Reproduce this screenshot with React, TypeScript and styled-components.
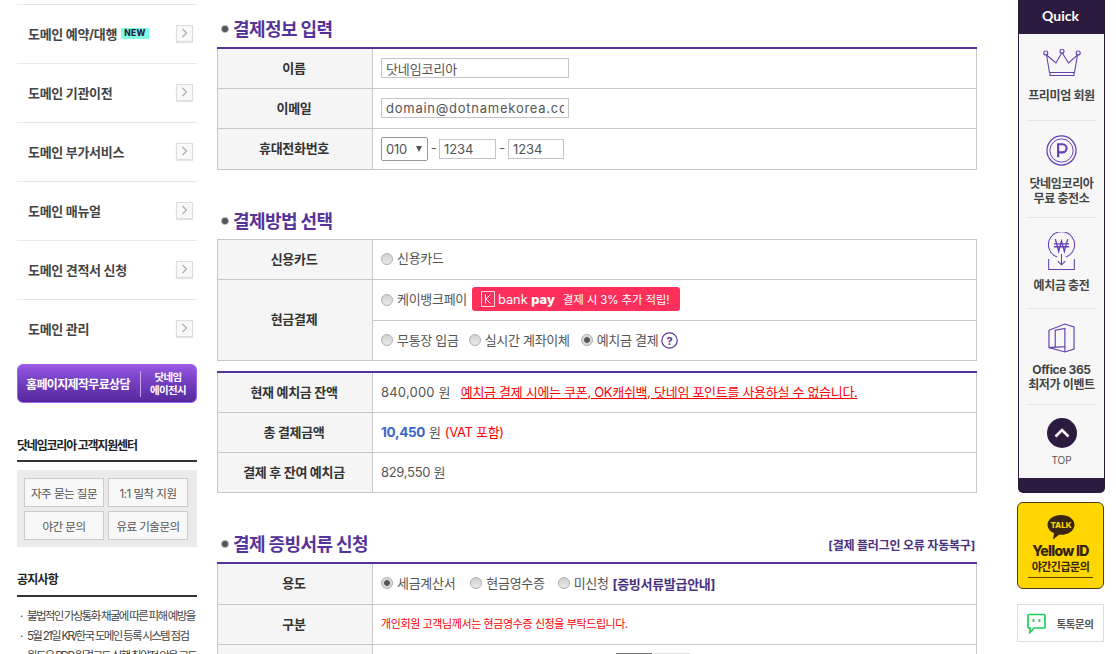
import React from "react";
import styled, { createGlobalStyle } from "styled-components";

const Global = createGlobalStyle`
  html, body { margin: 0; padding: 0; background: #fff; }
  body { font-family: Inter, "Noto Sans CJK KR", "Noto Sans", sans-serif; font-size: 13px; color: #555; }
  * { box-sizing: border-box; }
`;

const Page = styled.div`
  width: 1116px; height: 654px; overflow: hidden; display: flex; align-items: flex-start; padding-left: 17px;
`;

const Sidebar = styled.aside`width: 180px; flex: none; padding-top: 4px; margin-right: 20px;`;
const NavRow = styled.div`
  height: 59px; border-top: 1px solid #e8e8e8; display: flex; align-items: center; padding: 0 4px 2px 11px;
  font-size: 13px; font-weight: 700; color: #444; letter-spacing: -0.3px;
`;
const NavLabel = styled.span`flex: 1; display: flex; align-items: center; gap: 4px; white-space: nowrap;`;
const NewBadge = styled.span`
  background: #7fffe0; color: #2d1a3f; font: 800 8.5px Inter, sans-serif; letter-spacing: 0.3px;
  padding: 0 3px; height: 11px; line-height: 11px; display: inline-block; margin-top: 1px;
`;
const ChevronBox = styled.span`
  width: 17px; height: 17px; border: 1px solid #ddd; background: #f8f8f8; display: flex; align-items: center;
  justify-content: center; box-shadow: 0 1px 1px #e5e5e5;
`;
const Banner = styled.div`
  height: 39px; margin-top: 6px; border-radius: 6px; border: 1px solid #9a62ea;
  background: linear-gradient(#9a58e6, #7a44c8 35%, #56289c); color: #fff; display: flex; align-items: center;
  font-weight: 700; white-space: nowrap; padding-left: 8px;
`;
const BannerMain = styled.span`font-size: 12px; letter-spacing: -0.65px; width: 114px; text-align: left;`;
const BannerSide = styled.span`
  font-size: 10.5px; line-height: 13px; text-align: center; border-left: 1px solid #c9a8f0;
  width: 50px; padding-left: 5px; letter-spacing: -0.6px;
`;
const SideHeading = styled.h3<{ $ls: number }>`
  margin: 0; font-size: 12px; font-weight: 700; color: #222; letter-spacing: ${p => p.$ls}px; border-bottom: 2px solid #333;
  display: flex; align-items: center;
`;
const HelpHeading = styled(SideHeading)`height: 33px; margin-top: 26px;`;
const NoticeHeading = styled(SideHeading)`height: 32px; margin-top: 18px; padding-bottom: 3px;`;
const HelpGrid = styled.div`
  margin-top: 8px; background: #ebebeb; padding: 8px 9px 7px 7px; display: grid; grid-template-columns: 80px 80px;
  grid-auto-rows: 29px; gap: 4px;
`;
const HelpButton = styled.div`
  background: #f8f8f8; border: 1px solid #ccc; display: flex; align-items: center; justify-content: center;
  font-size: 11.5px; color: #555; letter-spacing: -0.5px;
`;
const NoticeList = styled.ul`margin: 9px 0 0; padding: 0; list-style: none;`;
const NoticeItem = styled.li`
  height: 20px; line-height: 20px; font-size: 11.5px; color: #444; letter-spacing: -1.7px; white-space: nowrap;
  padding-left: 3px; overflow: hidden; display: flex;
  &::before { content: "·"; width: 7px; flex: none; }
`;

const Main = styled.main`width: 760px; flex: none; margin-right: 41px;`;
const HeadRow = styled.div`height: 36px; display: flex; align-items: center; justify-content: space-between; padding-bottom: 2px;`;
const Title = styled.h2`
  margin: 0; display: flex; align-items: center; gap: 5px; font-size: 18px; font-weight: 700; color: #56339a; letter-spacing: -0.6px;
  padding-left: 5px;
`;
const Dot = styled.i`
  width: 6px; height: 6px; border-radius: 50%; background: #555; box-shadow: 0 0 0 1px #bbb; display: inline-block; margin-top: 2px;
`;
const HeadLink = styled.span`font-size: 12px; font-weight: 700; color: #48327e; letter-spacing: -0.2px; padding-right: 2px; margin-top: 2px;`;
const Section = styled.section<{ $gap: number }>`margin-top: ${p => p.$gap}px;`;
const Table = styled.table<{ $purple?: boolean }>`
  width: 760px; table-layout: fixed; border-collapse: collapse; border-top: ${p => (p.$purple ? "2px solid #56339a" : "1px solid #c8c8c8")};
  border-left: 1px solid #c8c8c8; border-right: 1px solid #c8c8c8;
`;
const Th = styled.th`
  width: 155px; background: #f5f5f5; font-size: 13px; font-weight: 700; color: #333; text-align: center; padding: 0 2px 2px 0;
  border-right: 1px solid #c8c8c8; border-bottom: 1px solid #c8c8c8; letter-spacing: -0.3px;
`;
const Tr = styled.tr<{ $h?: number }>`height: ${p => p.$h ?? 40}px;`;
const Td = styled.td`
  padding: 0 8px 2px; border-bottom: 1px solid #c8c8c8; font-size: 13px; color: #555; white-space: nowrap; letter-spacing: -0.3px;
`;
const FieldTd = styled(Td)`padding-bottom: 0;`;
const TabTd = styled(Td)`vertical-align: top; padding-top: 8px;`;
const Flex = styled.div`display: flex; align-items: center;`;
const Field = styled.input<{ $w: number; $ls?: number }>`
  width: ${p => p.$w}px; height: 20px; border: 1px solid #c4c4c4; padding: 0 4px; font: 13px Inter, "Noto Sans CJK KR", sans-serif;
  color: #555; outline: none; display: block; background: #fff; letter-spacing: ${p => p.$ls ?? -0.1}px;
`;
const SelectBox = styled.div`
  width: 47px; height: 24px; border: 1px solid #999; border-radius: 2px; display: flex; align-items: center; justify-content: space-between;
  padding: 0 5px 0 4px; font-size: 13px; color: #555;
`;
const Caret = styled.i`
  width: 0; height: 0; border-left: 3.5px solid transparent; border-right: 3.5px solid transparent; border-top: 6px solid #555;
`;
const Dash = styled.span<{ $w: number }>`width: ${p => p.$w}px; text-align: center; margin-top: -2px;`;
const RadioMark = styled.i<{ $on?: boolean }>`
  width: 12px; height: 12px; border-radius: 50%; border: 1px solid #b0b0b0; flex: none; display: inline-block; margin: 2px 4px 0 0;
  background: ${p => p.$on
    ? "radial-gradient(circle, #555 0 2.5px, #d8d8d8 3.2px)"
    : "linear-gradient(#cfcfcf, #ebebeb)"};
`;
const Option = styled.label<{ $mr?: number }>`
  display: inline-flex; align-items: center; margin-right: ${p => p.$mr ?? 0}px;
`;
const KPay = styled.span`
  margin-left: 5px; width: 208px; height: 24px; border-radius: 3px; background: #ff2f5b; color: #fff; display: inline-flex; align-items: center;
  padding-left: 9px; font-size: 11.5px; letter-spacing: -0.15px; margin-top: 1px;
`;
const KPayBrand = styled.span`font: 400 12.8px Inter, sans-serif; margin: 0 8px 0 3px; letter-spacing: 0;`;
const KPayStrong = styled.b`font-weight: 800;`;
const Money = styled.span<{ $ls?: number }>`letter-spacing: ${p => p.$ls ?? -0.3}px;`;
const Underlined = styled.span`color: #f00; text-decoration: underline; margin-left: 10px; font-size: 13px; letter-spacing: -0.3px;`;
const Amount = styled.b`color: #3b66c4; font-size: 13.5px; font-weight: 700; margin-right: 4px;`;
const Red = styled.span`color: #f00;`;
const VatNote = styled(Red)`margin-left: 4px;`;
const SmallRed = styled(Red)`font-size: 11px; letter-spacing: -0.4px;`;
const GuideLink = styled.b`color: #48327e; margin-left: 4px; font-size: 13px; letter-spacing: -0.3px;`;
const Tabs = styled.div`display: flex; gap: 2px; margin-left: 235px; height: 20px;`;
const TabBox = styled.span<{ $dark?: boolean }>`
  width: 36px; height: 20px; background: ${p => (p.$dark ? "#777" : "#ddd")};
`;

const Rail = styled.div`width: 88px; flex: none;`;
const Quick = styled.nav`width: 87px; display: flex; flex-direction: column;`;
const QuickHead = styled.div`
  height: 34px; background: #2d1a3f; color: #fff; font-size: 14px; font-weight: 700; display: flex; align-items: center; justify-content: center;
  font-family: Lato, Inter, sans-serif; padding: 0 2px 4px 0;
`;
const QuickBody = styled.div`background: #f7f7f7; border-left: 1px solid #2d1a3f; border-right: 1px solid #2d1a3f;`;
const QuickItem = styled.div<{ $h: number; $top?: number }>`
  height: ${p => p.$h}px; display: flex; flex-direction: column; align-items: center; padding-top: ${p => p.$top ?? 14}px;
  font-size: 12px; font-weight: 700; line-height: 15px; color: #444; text-align: center; letter-spacing: -0.35px;
  &::after { content: ""; width: 70px; height: 1px; background: #e5e5e5; margin-top: auto; }
`;
const QuickLabel = styled.span<{ $gap: number }>`margin-top: ${p => p.$gap}px; white-space: nowrap;`;
const TopItem = styled.div`
  height: 73px; display: flex; flex-direction: column; align-items: center; padding-top: 13px; font-size: 10px; color: #555;
`;
const TopCircle = styled.span`
  width: 30px; height: 30px; border-radius: 50%; background: #2d1a3f; display: flex; align-items: center; justify-content: center; margin-bottom: 6px;
`;
const QuickFoot = styled.div`height: 15px; background: #2d1a3f; border-radius: 0 0 5px 5px;`;
const YellowCard = styled.div`
  width: 87px; height: 87px; margin: 9px 0 0 -1px; background: #ffd600; border: 1px solid #4a3b1c; border-radius: 6px; display: flex; flex-direction: column;
  align-items: center; padding-top: 11px; color: #33240c;
`;
const YellowTitle = styled.b`font: 800 14px Inter, sans-serif; letter-spacing: -0.7px; margin-top: 1px; line-height: 18px;`;
const YellowSub = styled.span`
  font-size: 11px; font-weight: 700; letter-spacing: -0.5px; line-height: 14px; border-bottom: 1px solid #5a4510; padding: 0 4px 3px; margin-top: 0;
`;
const TalkCard = styled.div`
  width: 87px; height: 38px; margin: 15px 0 0 -1px; border: 1px solid #ddd; background: #fff; display: flex; align-items: center; justify-content: center; gap: 10px;
  font-size: 10.5px; font-weight: 700; color: #555; letter-spacing: -0.4px;
`;

const Chevron = () => (
  <svg width="7" height="10" viewBox="0 0 7 10" fill="none"><path d="M1.500 1l4 4-4 4" stroke="#aaa" strokeWidth="1.100" /></svg>
);
const KLogo = () => (
  <svg width="14" height="16" viewBox="0 0 14 16" fill="none" stroke="#fff">
    <path d="M.5.500h13v15H.5z" strokeWidth=".8" />
    <path d="M4.500 3.500v9M9.500 3.500L5 8l4.500 4.500" strokeWidth="1" />
  </svg>
);
const HelpIcon = () => (
  <svg width="17" height="17" viewBox="0 0 17 17" style={{ marginLeft: 3, marginTop: 2 }}>
    <circle cx="8.500" cy="8.500" r="7.700" fill="#fff" stroke="#56339a" strokeWidth="1.200" />
    <text x="8.500" y="12.500" fontSize="11" fontWeight="700" textAnchor="middle" fill="#56339a" fontFamily="Inter, sans-serif">?</text>
  </svg>
);
const Crown = () => (
  <svg width="38" height="29" viewBox="0 0 38 29" fill="none" stroke="#6440b4" strokeWidth="1.100">
    <circle cx="2.800" cy="4" r="2" /><circle cx="19" cy="2.300" r="2" /><circle cx="35.200" cy="4" r="2" />
    <path d="M3.500 6l3 17.500h25l3-17.500-9 8L19.500 4.300h-1L13 14 3.500 6z" />
    <path d="M7 23.500h24v3H7z" />
  </svg>
);
const PCoin = () => (
  <svg width="31" height="31" viewBox="0 0 32 32" fill="none" stroke="#6440b4">
    <circle cx="16" cy="16" r="15" strokeWidth="1.300" /><circle cx="16" cy="16" r="12" strokeWidth="1" />
    <path d="M12.500 23V9.500H17a4 4 0 010 8.500h-4.500" strokeWidth="2.200" />
  </svg>
);
const WonCoin = () => (
  <svg width="29" height="39" viewBox="0 0 30 41" fill="none" stroke="#6440b4" strokeWidth="1.100">
    <path d="M10.500 26.300A13.700 13.700 0 1119.500 26.300" />
    <path d="M8.500 7.500l3.500 13 3-11 3 11 3.500-13M7 12.500h16M7 15.500h16" strokeWidth="1.400" />
    <path d="M15 23v11M11 30.500l4 4 4-4" />
    <path d="M1.500 28.500V39.500h27V28.500" />
  </svg>
);
const OfficeDoor = () => (
  <svg width="27" height="30" viewBox="0 0 28 31" fill="none" stroke="#6440b4" strokeWidth="1.200">
    <path d="M1 7.500L17.500 1 27 4v23l-9.500 3L1 25.500V7.500z" />
    <path d="M1 25.500l16.500-1V5.500L7.500 7.500v17" />
    <path d="M17.500 24.500V30" />
  </svg>
);
const TalkBubble = () => (
  <svg width="30" height="27" viewBox="0 0 30 29">
    <path d="M15 1C7 1 .5 5.600.5 11.500c0 3.900 2.800 7.200 7 9l-1 7 6.300-5.300c.7.100 1.500.200 2.200.200 8 0 14.500-4.800 14.500-10.900S23 1 15 1z" fill="#3a2510" />
    <text x="15" y="15" fontSize="8.500" fontWeight="800" textAnchor="middle" fill="#ffd600" fontFamily="Inter, sans-serif">TALK</text>
  </svg>
);
const TalkChat = () => (
  <svg width="19" height="21" viewBox="0 0 19 21" fill="none">
    <path d="M2 1.500h15a1 1 0 011 1V14a1 1 0 01-1 1H7l-4 4.500V15H2a1 1 0 01-1-1V2.500a1 1 0 011-1z" stroke="#1fd05e" strokeWidth="1.700" />
    <path d="M6.500 6v3M12.500 6v3" stroke="#1fd05e" strokeWidth="1.800" />
  </svg>
);

const nav = ["도메인 기관이전", "도메인 부가서비스", "도메인 매뉴얼", "도메인 견적서 신청", "도메인 관리"];

export default function App() {
  return (
    <>
      <Global />
      <Page>
        <Sidebar>
          <NavRow>
            <NavLabel>도메인 예약/대행<NewBadge>NEW</NewBadge></NavLabel>
            <ChevronBox><Chevron /></ChevronBox>
          </NavRow>
          {nav.map(n => (
            <NavRow key={n}>
              <NavLabel>{n}</NavLabel>
              <ChevronBox><Chevron /></ChevronBox>
            </NavRow>
          ))}
          <Banner>
            <BannerMain>홈페이지제작무료상담</BannerMain>
            <BannerSide>닷네임<br />에이전시</BannerSide>
          </Banner>
          <HelpHeading $ls={-1.2}>닷네임코리아 고객지원센터</HelpHeading>
          <HelpGrid>
            <HelpButton>자주 묻는 질문</HelpButton>
            <HelpButton>1:1 밀착 지원</HelpButton>
            <HelpButton>야간 문의</HelpButton>
            <HelpButton>유료 기술문의</HelpButton>
          </HelpGrid>
          <NoticeHeading $ls={-0.75}>공지사항</NoticeHeading>
          <NoticeList>
            <NoticeItem>불법적인 가상통화 채굴에 따른 피해 예방을</NoticeItem>
            <NoticeItem>5월 21일 KR/한국 도메인 등록 시스템 점검</NoticeItem>
            <NoticeItem>윈도우 RDP 원격코드 실행 취약점 악용 코드</NoticeItem>
          </NoticeList>
        </Sidebar>

        <Main>
          <Section $gap={11}>
            <HeadRow><Title><Dot />결제정보 입력</Title></HeadRow>
            <Table $purple>
              <tbody>
                <Tr><Th>이름</Th><FieldTd><Field $w={188} readOnly defaultValue="닷네임코리아" /></FieldTd></Tr>
                <Tr><Th>이메일</Th><FieldTd><Field $w={188} $ls={0.75} readOnly defaultValue="domain@dotnamekorea.co.kr" /></FieldTd></Tr>
                <Tr $h={41}>
                  <Th>휴대전화번호</Th>
                  <FieldTd>
                    <Flex>
                      <SelectBox>010<Caret /></SelectBox>
                      <Dash $w={11}>-</Dash>
                      <Field $w={57} readOnly defaultValue="1234" />
                      <Dash $w={12}>-</Dash>
                      <Field $w={56} readOnly defaultValue="1234" />
                    </Flex>
                  </FieldTd>
                </Tr>
              </tbody>
            </Table>
          </Section>

          <Section $gap={33}>
            <HeadRow><Title><Dot />결제방법 선택</Title></HeadRow>
            <Table>
              <tbody>
                <Tr><Th>신용카드</Th><Td><Option><RadioMark />신용카드</Option></Td></Tr>
                <Tr $h={41}>
                  <Th rowSpan={2}>현금결제</Th>
                  <Td>
                    <Flex>
                      <Option><RadioMark />케이뱅크페이</Option>
                      <KPay>
                        <KLogo />
                        <KPayBrand>bank <KPayStrong>pay</KPayStrong></KPayBrand>
                        결제 시 3% 추가 적립!
                      </KPay>
                    </Flex>
                  </Td>
                </Tr>
                <Tr>
                  <Td>
                    <Flex>
                      <Option $mr={10}><RadioMark />무통장 입금</Option>
                      <Option $mr={11}><RadioMark />실시간 계좌이체</Option>
                      <Option><RadioMark $on />예치금 결제</Option>
                      <HelpIcon />
                    </Flex>
                  </Td>
                </Tr>
              </tbody>
            </Table>
          </Section>

          <Section $gap={10}>
            <Table $purple>
              <tbody>
                <Tr $h={41}><Th>현재 예치금 잔액</Th><Td><Money $ls={0.2}>840,000 원</Money><Underlined>예치금 결제 시에는 쿠폰, OK캐쉬백, 닷네임 포인트를 사용하실 수 없습니다.</Underlined></Td></Tr>
                <Tr><Th>총 결제금액</Th><Td><Amount>10,450</Amount>원<VatNote>(VAT 포함)</VatNote></Td></Tr>
                <Tr><Th>결제 후 잔여 예치금</Th><Td><Money>829,550 원</Money></Td></Tr>
              </tbody>
            </Table>
          </Section>

          <Section $gap={33}>
            <HeadRow>
              <Title><Dot />결제 증빙서류 신청</Title>
              <HeadLink>[결제 플러그인 오류 자동복구]</HeadLink>
            </HeadRow>
            <Table $purple>
              <tbody>
                <Tr $h={41}>
                  <Th>용도</Th>
                  <Td>
                    <Option $mr={15}><RadioMark $on />세금계산서</Option>
                    <Option $mr={13}><RadioMark />현금영수증</Option>
                    <Option><RadioMark />미신청</Option>
                    <GuideLink>[증빙서류발급안내]</GuideLink>
                  </Td>
                </Tr>
                <Tr><Th>구분</Th><Td><SmallRed>개인회원 고객님께서는 현금영수증 신청을 부탁드립니다.</SmallRed></Td></Tr>
                <Tr>
                  <Th />
                  <TabTd><Tabs><TabBox $dark /><TabBox /></Tabs></TabTd>
                </Tr>
              </tbody>
            </Table>
          </Section>
        </Main>

        <Rail>
          <Quick>
            <QuickHead>Quick</QuickHead>
            <QuickBody>
              <QuickItem $h={87} $top={15}><Crown /><QuickLabel $gap={10}>프리미엄 회원</QuickLabel></QuickItem>
              <QuickItem $h={97}><PCoin /><QuickLabel $gap={10}>닷네임코리아<br />무료 충전소</QuickLabel></QuickItem>
              <QuickItem $h={91}><WonCoin /><QuickLabel $gap={7}>예치금 충전</QuickLabel></QuickItem>
              <QuickItem $h={96}><OfficeDoor /><QuickLabel $gap={9}>Office 365<br />최저가 이벤트</QuickLabel></QuickItem>
              <TopItem>
                <TopCircle>
                  <svg width="16" height="10" viewBox="0 0 16 10" fill="none"><path d="M1.500 8.500L8 2l6.500 6.500" stroke="#fff" strokeWidth="2.600" /></svg>
                </TopCircle>
                TOP
              </TopItem>
            </QuickBody>
            <QuickFoot />
          </Quick>
          <YellowCard>
            <TalkBubble />
            <YellowTitle>Yellow ID</YellowTitle>
            <YellowSub>야간긴급문의</YellowSub>
          </YellowCard>
          <TalkCard><TalkChat />톡톡문의</TalkCard>
        </Rail>
      </Page>
    </>
  );
}
